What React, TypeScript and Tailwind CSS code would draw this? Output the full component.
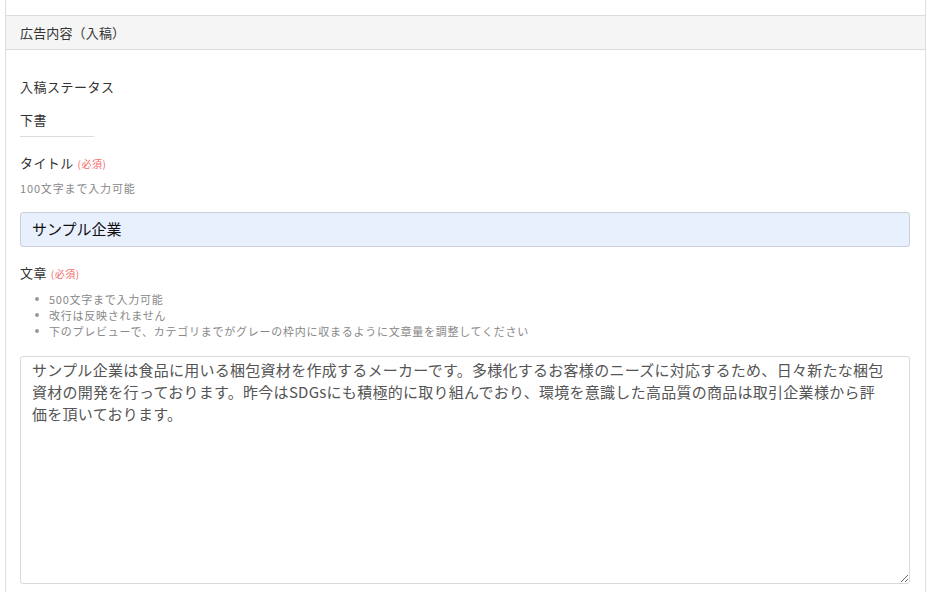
import React from "react";

const font = { fontFamily: '"Noto Sans CJK JP", "Noto Sans", sans-serif' };

export default function App() {
  const body =
    "サンプル企業は食品に用いる梱包資材を作成するメーカーです。多様化するお客様のニーズに対応するため、日々新たな梱包資材の開発を行っております。昨今はSDGsにも積極的に取り組んでおり、環境を意識した高品質の商品は取引企業様から評\n価を頂いております。";
  return (
    <div className="w-[937px] h-[592px] overflow-hidden bg-white" style={font}>
      <div className="ml-[5px] w-[921px] h-[592px] border-x border-[#dedede] pt-[15px]">
        <div className="h-[35px] border-y border-[#dcdcdc] bg-[#f5f5f5] flex items-center pl-[14px] text-[13px] text-[#333] tracking-[0.15px]">
          広告内容（入稿）
        </div>
        <div className="pl-[14px] pr-[15px] pt-[27px]">
          <div className="h-[20px] leading-[20px] text-[13px] tracking-[0.5px] text-[#333]">入稿ステータス</div>
          <div className="mt-[13px] w-[74px] h-[27px] pb-[7px] border-b border-[#dddddd] leading-[20px] text-[13px] tracking-[0.4px] text-[#333]">
            下書
          </div>
          <div className="mt-[16px] h-[20px] leading-[20px] text-[13px] tracking-[0.4px] text-[#333] flex items-baseline">
            <span>タイトル</span>
            <span className="ml-[4px] text-[10px] tracking-[0.5px] text-[#f36b6b]">(必須)</span>
          </div>
          <div className="mt-[7px] h-[16px] leading-[16px] text-[11px] tracking-[0.85px] text-[#888]">100文字まで入力可能</div>
          <div className="mt-[16px] h-[35px] rounded-[3px] border border-[#c9cfd8] bg-[#e8f0fe] flex items-center pl-[11px] text-[15px] text-[#111]">
            サンプル企業
          </div>
          <div className="mt-[16px] h-[20px] leading-[20px] text-[13px] tracking-[0.4px] text-[#333] flex items-baseline">
            <span>文章</span>
            <span className="ml-[4px] text-[10px] tracking-[0.5px] text-[#f36b6b]">(必須)</span>
          </div>
          <ul className="mt-[8px] text-[11px] leading-[16px] tracking-[0.75px] text-[#888]">
            {[
              "500文字まで入力可能",
              "改行は反映されません",
              "下のプレビューで、カテゴリまでがグレーの枠内に収まるように文章量を調整してください",
            ].map((t) => (
              <li key={t} className="flex items-center h-[16px]">
                <span className="ml-[15px] mr-[10px] w-[4px] h-[4px] rounded-full bg-[#999] shrink-0" />
                <span>{t}</span>
              </li>
            ))}
          </ul>
          <textarea
            className="mt-[17px] block w-full h-[228px] rounded-[3px] border border-[#d6d9de] bg-white pl-[11px] pr-[11px] pt-[2px] text-[15px] leading-[22px] tracking-[0.27px] text-[#555] outline-none"
            style={font}
            defaultValue={body}
          />
        </div>
      </div>
    </div>
  );
}
